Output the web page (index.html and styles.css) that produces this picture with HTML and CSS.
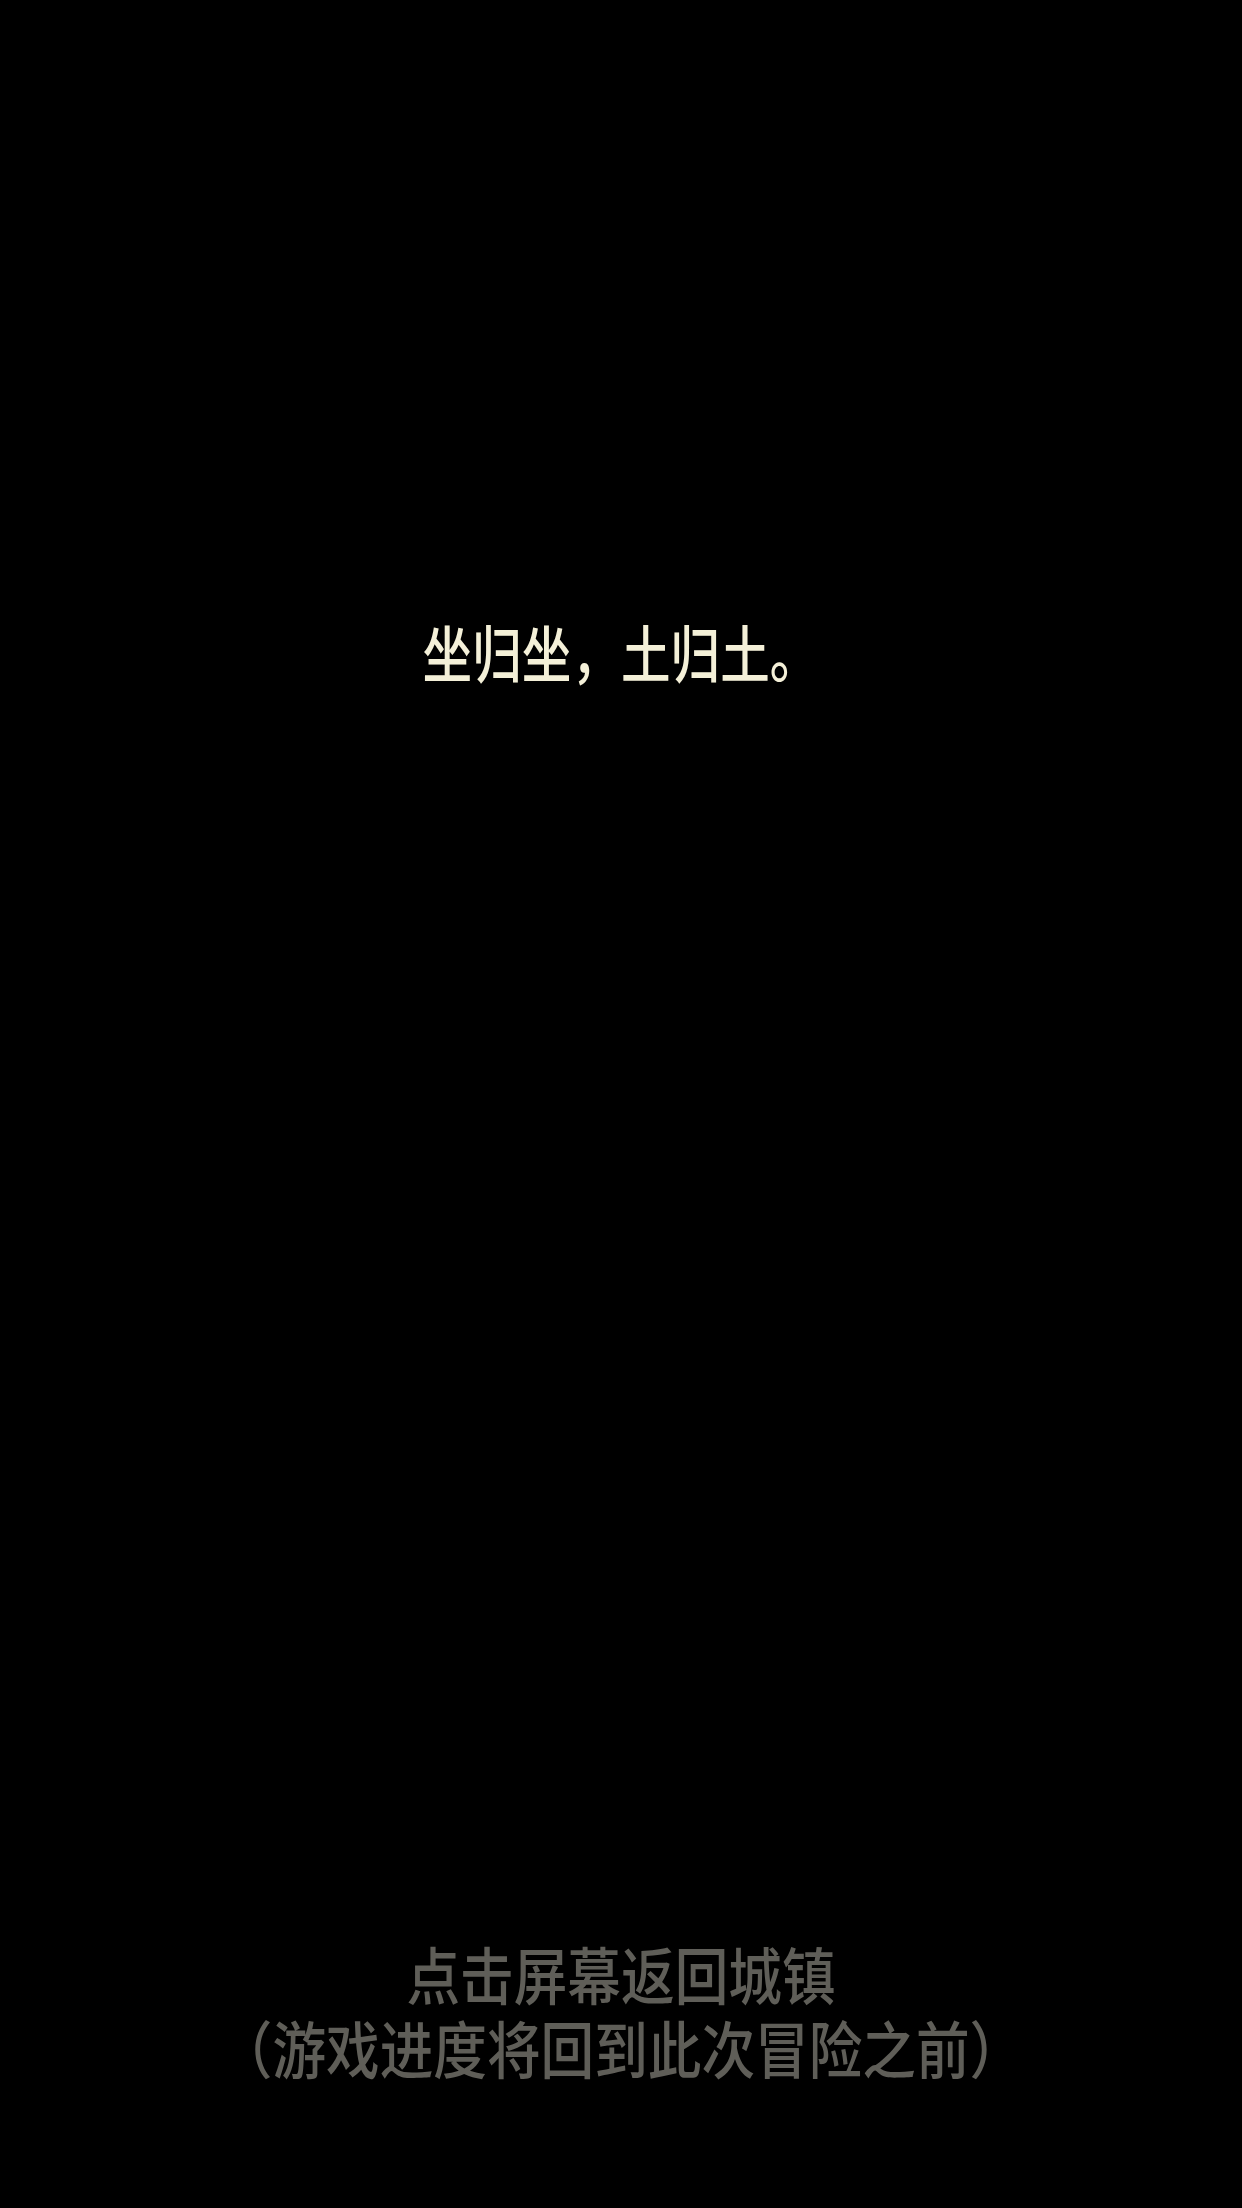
FILE: index.html
```html
<!DOCTYPE html>
<html lang="zh-CN">
<head>
<meta charset="utf-8">
<title>坐归坐，土归土。</title>
<link rel="stylesheet" href="styles.css">
</head>
<body>
<main class="screen">
  <p class="epitaph">坐归坐，土归土。</p>
  <div class="return-hint">
    <p class="hint-line">点击屏幕返回城镇</p>
    <p class="hint-line">（游戏进度将回到此次冒险之前）</p>
  </div>
</main>
</body>
</html>
```

FILE: styles.css
```css
html, body {
  margin: 0;
  padding: 0;
  background: #000;
}

.screen {
  width: 1242px;
  height: 2208px;
  display: flex;
  flex-direction: column;
  align-items: center;
  justify-content: space-between;
  box-sizing: border-box;
  padding: 614px 0 124px;
  font-family: "Noto Sans CJK SC", "Noto Sans", sans-serif;
  font-weight: 500;
}

.epitaph,
.hint-line {
  margin: 0;
  font-size: 62px;
  line-height: 74px;
  white-space: nowrap;
}

.epitaph {
  color: #f4f0d8;
  transform: scaleX(0.8);
}

.return-hint {
  display: flex;
  flex-direction: column;
  align-items: center;
}

.hint-line {
  color: #5f5e58;
  transform: scaleX(0.865);
}
```
